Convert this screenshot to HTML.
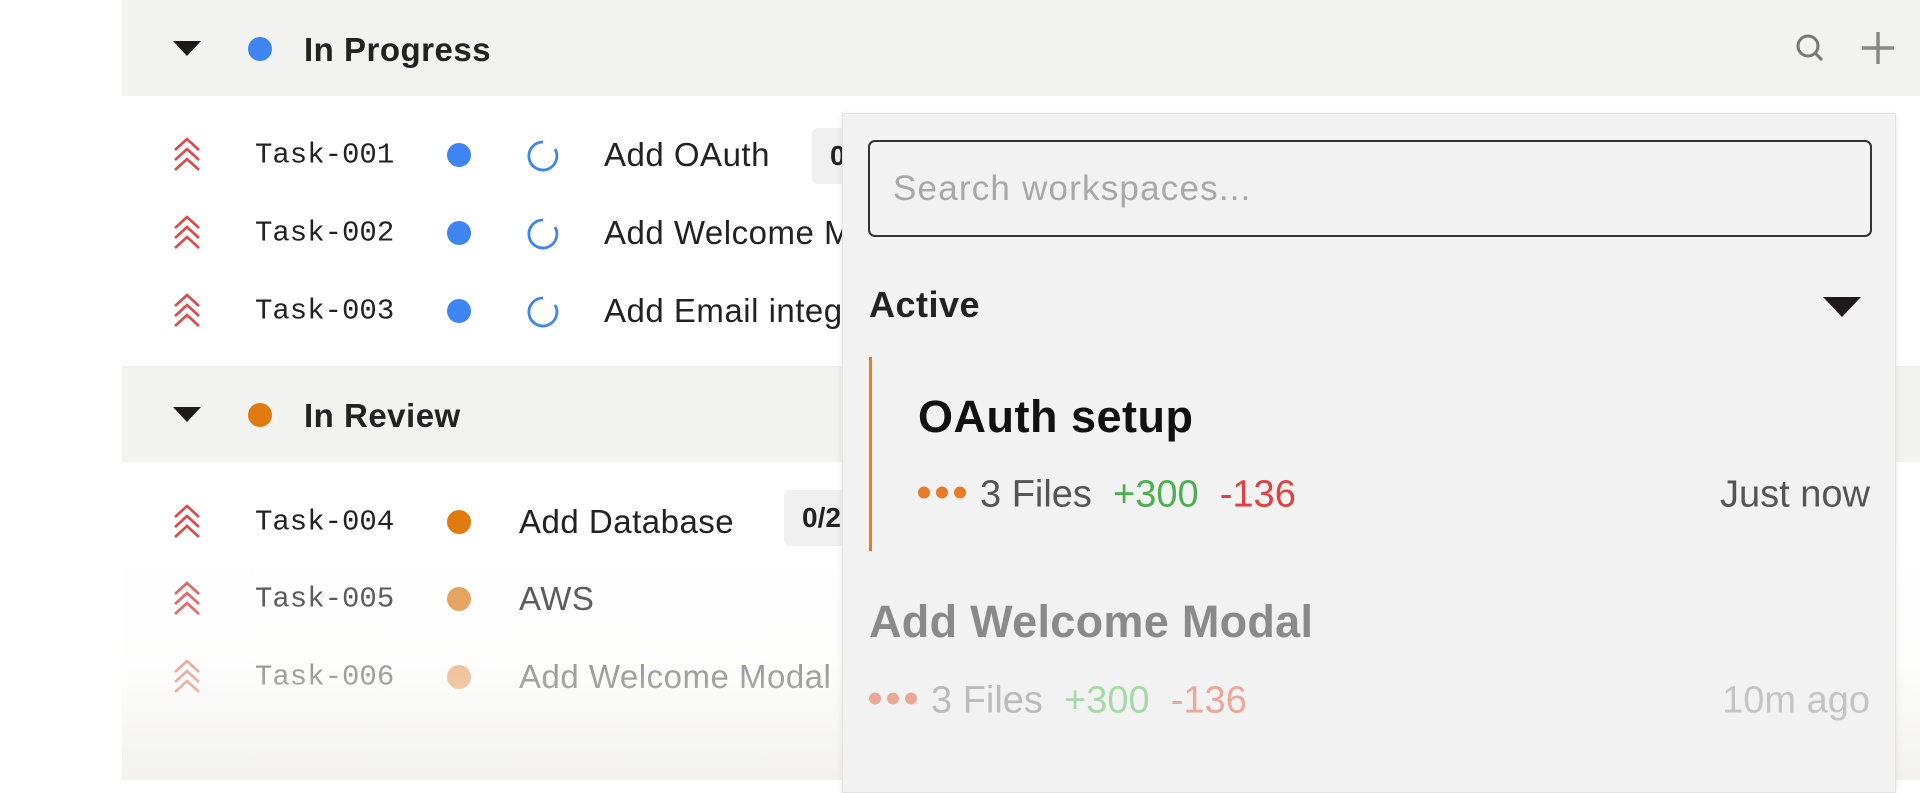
<!DOCTYPE html><html><head><meta charset="utf-8"><style>
*{margin:0;padding:0;box-sizing:border-box}
body{width:1920px;height:780px;overflow:hidden;background:#fff;font-family:"Liberation Sans",sans-serif;position:relative}
.a{position:absolute;white-space:nowrap}
.band{position:absolute;left:122px;width:1798px;height:96px;background:#f2f2f1}
.tri{position:absolute;width:0;height:0;border-left:14px solid transparent;border-right:14px solid transparent;border-top:15px solid #1e1a1a}
.dot{position:absolute;width:24px;height:24px;border-radius:50%}
.hd{font-size:33px;font-weight:600;color:#222;transform:translateY(-50%);letter-spacing:.5px}
.tid{font-family:"Liberation Mono",monospace;font-size:29px;color:#222;transform:translateY(-50%)}
.tt{font-size:33px;color:#222;transform:translateY(-50%);letter-spacing:.5px}
.badge{position:absolute;background:#f0f0f0;border-radius:6px;height:56px;font-size:28px;font-weight:600;padding:12px 18px;color:#222}
.dots{display:inline-block;width:48px;height:12px;vertical-align:8px;margin-right:14px}
</style></head><body>
<div class="band" style="top:0"></div>
<div class="tri" style="left:173px;top:41px"></div>
<div class="dot" style="left:248px;top:37px;background:#3e85f2"></div>
<div class="a hd" style="left:304px;top:50px">In Progress</div>
<svg class="a" style="left:1790px;top:28px" width="40" height="40" viewBox="0 0 40 40"><circle cx="18" cy="18" r="10" fill="none" stroke="#777" stroke-width="3"/><line x1="25" y1="25" x2="32" y2="32" stroke="#777" stroke-width="3"/></svg>
<svg class="a" style="left:1858px;top:28px" width="40" height="40" viewBox="0 0 40 40"><path d="M20 4V36M4 20H36" stroke="#888" stroke-width="3.5"/></svg>

<svg width="0" height="0" style="position:absolute"><defs><g id="chev"><path d="M2 14L14 3L26 14M2 24L14 13L26 24M2 34L14 23L26 34" fill="none" stroke-width="2.6"/></g></defs></svg>

<div class="badge" style="left:812px;top:128px">0/2</div>
<svg class="a" style="left:173px;top:136px" width="28" height="38"><use href="#chev" stroke="#e04848"/></svg>
<div class="a tid" style="left:255px;top:155px">Task-001</div>
<div class="dot" style="left:447px;top:143px;background:#3e85f2"></div>
<svg class="a" style="left:526px;top:139px" width="34" height="34" viewBox="0 0 34 34"><path d="M17 3A14 14 0 1 0 29 10" fill="none" stroke="#3e85f2" stroke-width="2.8"/></svg>
<div class="a tt" style="left:604px;top:155px">Add OAuth</div>

<svg class="a" style="left:173px;top:214px" width="28" height="38"><use href="#chev" stroke="#e04848"/></svg>
<div class="a tid" style="left:255px;top:233px">Task-002</div>
<div class="dot" style="left:447px;top:221px;background:#3e85f2"></div>
<svg class="a" style="left:526px;top:217px" width="34" height="34" viewBox="0 0 34 34"><path d="M17 3A14 14 0 1 0 29 10" fill="none" stroke="#3e85f2" stroke-width="2.8"/></svg>
<div class="a tt" style="left:604px;top:233px">Add Welcome Modal</div>

<svg class="a" style="left:173px;top:292px" width="28" height="38"><use href="#chev" stroke="#e04848"/></svg>
<div class="a tid" style="left:255px;top:311px">Task-003</div>
<div class="dot" style="left:447px;top:299px;background:#3e85f2"></div>
<svg class="a" style="left:526px;top:295px" width="34" height="34" viewBox="0 0 34 34"><path d="M17 3A14 14 0 1 0 29 10" fill="none" stroke="#3e85f2" stroke-width="2.8"/></svg>
<div class="a tt" style="left:604px;top:311px">Add Email integration</div>

<div class="band" style="top:366px"></div>
<div class="tri" style="left:173px;top:407px"></div>
<div class="dot" style="left:248px;top:403px;background:#e07b10"></div>
<div class="a hd" style="left:304px;top:416px">In Review</div>

<div class="badge" style="left:784px;top:490px">0/2</div>
<svg class="a" style="left:173px;top:503px" width="28" height="38"><use href="#chev" stroke="#e04848"/></svg>
<div class="a tid" style="left:255px;top:522px">Task-004</div>
<div class="dot" style="left:447px;top:510px;background:#e07b10"></div>
<div class="a tt" style="left:519px;top:522px">Add Database</div>

<svg class="a" style="left:173px;top:580px" width="28" height="38"><use href="#chev" stroke="#ea5e5e"/></svg>
<div class="a tid" style="left:255px;top:599px;color:#555">Task-005</div>
<div class="dot" style="left:447px;top:587px;background:#e6a05a"></div>
<div class="a tt" style="left:519px;top:599px;color:#555">AWS</div>
<svg class="a" style="left:173px;top:658px" width="28" height="38"><use href="#chev" stroke="#eca090"/></svg>
<div class="a tid" style="left:255px;top:677px;color:#8e8e8e">Task-006</div>
<div class="dot" style="left:447px;top:665px;background:#f0bb90"></div>
<div class="a tt" style="left:519px;top:677px;color:#8e8e8e">Add Welcome Modal</div>
<div style="position:absolute;left:122px;top:540px;width:1798px;height:240px;background:linear-gradient(rgba(239,239,235,0),rgba(239,239,235,.1) 50%,rgba(239,238,233,.75))"></div>

<div style="position:absolute;left:842px;top:113px;width:1054px;height:680px;background:#f2f2f2;border:1px solid #e2e2e2;box-shadow:0 2px 8px rgba(0,0,0,.08)">
<div style="position:absolute;left:25px;top:26px;width:1004px;height:97px;border:2px solid #333;border-radius:7px;background:#f2f2f2"></div>
<div class="a" style="left:50px;top:75px;transform:translateY(-50%);font-size:35px;color:#a8a8a8;letter-spacing:1.2px">Search workspaces...</div>
<div class="a hd" style="left:26px;top:191px;color:#222;font-size:36px">Active</div>
<div class="tri" style="left:980px;top:183px;border-left-width:19px;border-right-width:19px;border-top-width:20px"></div>
<div style="position:absolute;left:26px;top:243px;width:3px;height:194px;background:#e87b25"></div>
<div class="a" style="left:75px;top:303px;transform:translateY(-50%);font-size:45px;font-weight:600;color:#111;letter-spacing:.5px">OAuth setup</div>
<div class="a" style="left:75px;top:381px;transform:translateY(-50%);font-size:38px;color:#555"><svg class="dots" viewBox="0 0 48 12"><circle cx="6" cy="6" r="6" fill="#e87b25"/><circle cx="24" cy="6" r="6" fill="#e87b25"/><circle cx="42" cy="6" r="6" fill="#e87b25"/></svg>3 Files&nbsp;&nbsp;<span style="color:#4caf50">+300</span>&nbsp;&nbsp;<span style="color:#e04040">-136</span></div>
<div class="a" style="right:25px;top:381px;transform:translateY(-50%);font-size:38px;color:#555">Just now</div>
<div class="a" style="left:26px;top:508px;transform:translateY(-50%);font-size:45px;font-weight:600;color:#8a8a8a;letter-spacing:.3px">Add Welcome Modal</div>
<div class="a" style="left:26px;top:587px;transform:translateY(-50%);font-size:38px;color:#bbb"><svg class="dots" viewBox="0 0 48 12"><circle cx="6" cy="6" r="6" fill="#eaa898"/><circle cx="24" cy="6" r="6" fill="#eaa898"/><circle cx="42" cy="6" r="6" fill="#eaa898"/></svg>3 Files&nbsp;&nbsp;<span style="color:#a8d8a8">+300</span>&nbsp;&nbsp;<span style="color:#eaa898">-136</span></div>
<div class="a" style="right:25px;top:587px;transform:translateY(-50%);font-size:38px;color:#c4c4c4">10m ago</div>
</div>
</body></html>
